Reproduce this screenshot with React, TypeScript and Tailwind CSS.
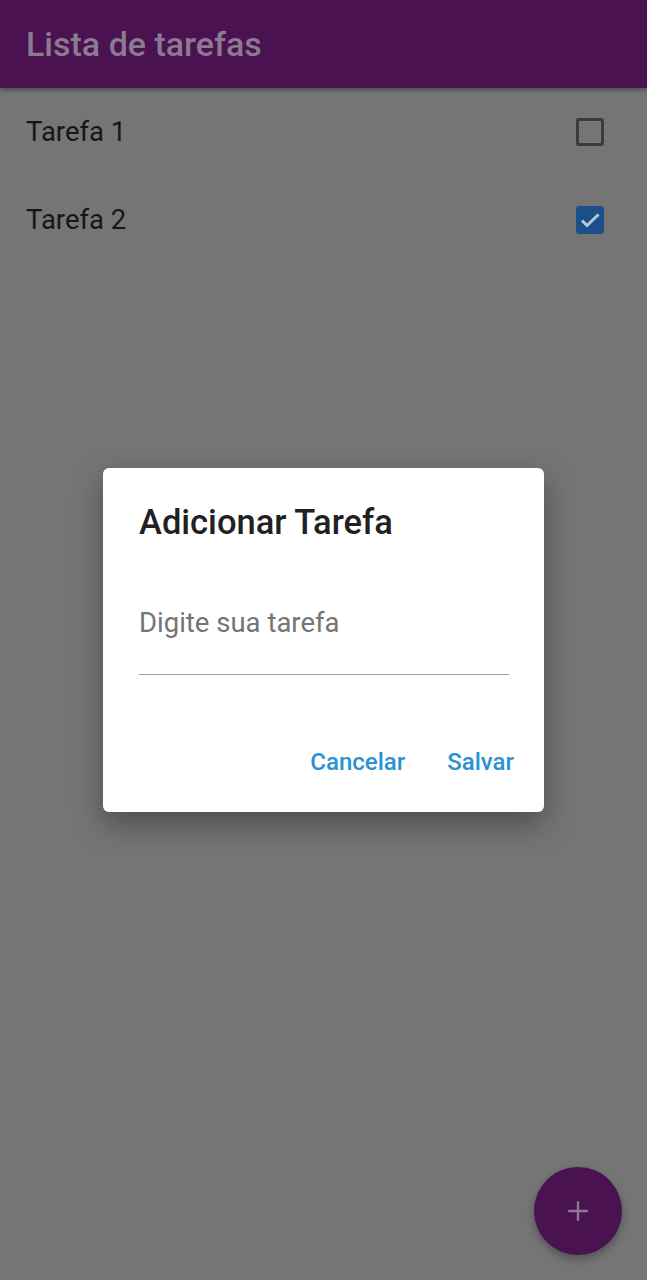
import { useState } from "react";

type Task = { id: number; title: string; done: boolean };

const initialTasks: Task[] = [
    { id: 1, title: "Tarefa 1", done: false },
    { id: 2, title: "Tarefa 2", done: true },
];

const TaskCheckbox = ({ checked }: { checked: boolean }) => {
    if (checked) {
        return (
            <div className="flex h-[28px] w-[28px] items-center justify-center rounded-[3px] bg-[#1b4f8a]">
                <svg width="28" height="28" viewBox="0 0 28 28" fill="none">
                    <path
                        d="M6 14.5l5 5L22.5 8.5"
                        stroke="#b9c7d6"
                        strokeWidth="3"
                    />
                </svg>
            </div>
        );
    }
    return (
        <div className="h-[28px] w-[28px] rounded-[3px] border-[3px] border-[#3b3b3b]" />
    );
};

export default function App() {
    const [tasks] = useState<Task[]>(initialTasks);

    return (
        <div
            className="relative h-[1280px] w-full overflow-hidden bg-[#757575]"
            style={{ fontFamily: "Roboto, 'Noto Sans', sans-serif" }}
        >
            {/* app bar */}
            <header className="relative z-10 flex h-[88px] items-center bg-[#4a1251] px-[26px] shadow-[0_2px_4px_rgba(0,0,0,0.35)]">
                <h1 className="text-[34px] font-medium leading-none text-[#8c7b90]">
                    Lista de tarefas
                </h1>
            </header>

            {/* tasks */}
            <ul>
                {tasks.map((task) => (
                    <li
                        key={task.id}
                        className="flex h-[88px] items-center justify-between pl-[26px] pr-[43px]"
                    >
                        <span className="text-[27.5px] leading-none text-[#161616]">
                            {task.title}
                        </span>
                        <TaskCheckbox checked={task.done} />
                    </li>
                ))}
            </ul>

            {/* fab */}
            <button className="absolute bottom-[25px] right-[25px] flex h-[88px] w-[88px] items-center justify-center rounded-full bg-[#4a1251] shadow-[0_4px_8px_rgba(0,0,0,0.3)]">
                <svg width="26" height="26" viewBox="0 0 24 24" fill="none">
                    <path
                        d="M12 3v18M3 12h18"
                        stroke="#8c7b90"
                        strokeWidth="2.2"
                    />
                </svg>
            </button>

            {/* dialog */}
            <div className="absolute inset-0 z-20 flex items-start justify-center pt-[468px]">
                <div className="flex h-[344px] w-[441px] flex-col rounded-[6px] bg-white pl-[36px] pr-[30px] pt-[34px] shadow-[0_12px_30px_rgba(0,0,0,0.35)]">
                    <h2 className="text-[34.5px] font-medium leading-[40px] text-[#212121]">
                        Adicionar Tarefa
                    </h2>
                    <div className="mt-[66px] mr-[5px] border-b-[1.5px] border-[#9e9e9e] pb-[35px]">
                        <input
                            type="text"
                            placeholder="Digite sua tarefa"
                            className="w-full bg-transparent text-[27.5px] leading-[30px] text-[#212121] outline-none placeholder:text-[#747474]"
                        />
                    </div>
                    <div className="mt-[73px] flex justify-end gap-[42px]">
                        <button className="text-[24px] font-medium leading-[28px] text-[#2a92d2]">
                            Cancelar
                        </button>
                        <button className="text-[24px] font-medium leading-[28px] text-[#2a92d2]">
                            Salvar
                        </button>
                    </div>
                </div>
            </div>
        </div>
    );
}
